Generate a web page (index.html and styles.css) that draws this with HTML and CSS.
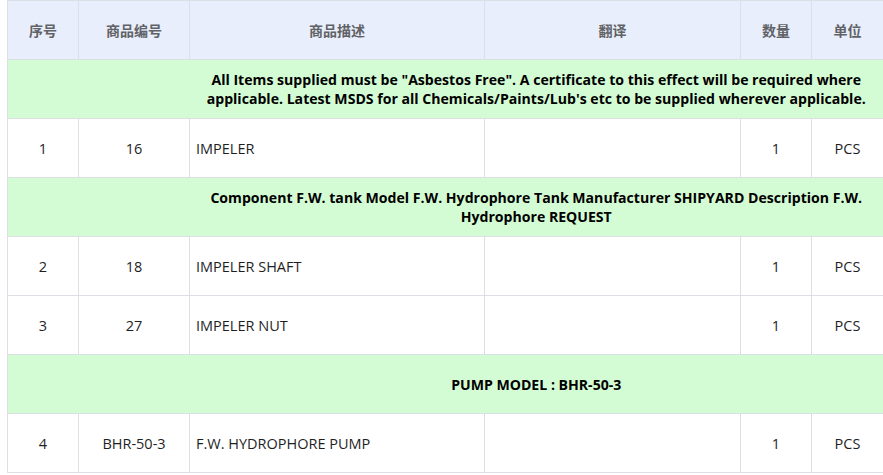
FILE: index.html
```html
<!DOCTYPE html>
<html lang="zh">
<head>
<meta charset="utf-8">
<link rel="stylesheet" href="styles.css">
</head>
<body>
<div class="wrap">
<table class="grid">
  <colgroup>
    <col class="c1"><col class="c2"><col class="c3"><col class="c4"><col class="c5"><col class="c6">
  </colgroup>
  <thead>
    <tr>
      <th>序号</th><th>商品编号</th><th>商品描述</th><th>翻译</th><th>数量</th><th>单位</th>
    </tr>
  </thead>
  <tbody>
    <tr class="note">
      <td class="pad" colspan="2"></td>
      <td class="txt" colspan="4">All Items supplied must be "Asbestos Free". A certificate to this effect will be required where applicable. Latest MSDS for all Chemicals/Paints/Lub's etc to be supplied wherever applicable.</td>
    </tr>
    <tr>
      <td>1</td><td>16</td><td class="left">IMPELER</td><td class="left"></td><td>1</td><td>PCS</td>
    </tr>
    <tr class="note">
      <td class="pad" colspan="2"></td>
      <td class="txt" colspan="4">Component F.W. tank Model F.W. Hydrophore Tank Manufacturer SHIPYARD Description F.W. Hydrophore REQUEST</td>
    </tr>
    <tr>
      <td>2</td><td>18</td><td class="left">IMPELER SHAFT</td><td class="left"></td><td>1</td><td>PCS</td>
    </tr>
    <tr>
      <td>3</td><td>27</td><td class="left">IMPELER NUT</td><td class="left"></td><td>1</td><td>PCS</td>
    </tr>
    <tr class="note">
      <td class="pad" colspan="2"></td>
      <td class="txt" colspan="4">PUMP MODEL : BHR-50-3</td>
    </tr>
    <tr>
      <td>4</td><td>BHR-50-3</td><td class="left">F.W. HYDROPHORE PUMP</td><td class="left"></td><td>1</td><td>PCS</td>
    </tr>
  </tbody>
</table>
</div>
</body>
</html>
```
FILE: styles.css
```css
html, body {
  margin: 0;
  padding: 0;
  background: #ffffff;
}
.wrap {
  padding-left: 7px;
}
.grid {
  border-collapse: collapse;
  table-layout: fixed;
  width: 876px;
  font-family: "Open Sans", "Noto Sans CJK SC", sans-serif;
  font-size: 14.5px;
  color: #1f1f1f;
}
.c1 { width: 71px; }
.c2 { width: 111px; }
.c3 { width: 295px; }
.c4 { width: 256px; }
.c5 { width: 71px; }
.c6 { width: 72px; }
.grid th, .grid td {
  border: 1px solid #dcdfe6;
  height: 59px;
  padding: 0 6px;
  text-align: center;
  vertical-align: middle;
  line-height: 19px;
  box-sizing: border-box;
}
.grid th {
  background: #e9eefc;
  color: #606266;
  font-size: 14px;
  font-weight: bold;
  font-family: "Noto Sans CJK SC", sans-serif;
}
.grid td.left {
  text-align: left;
}
.note td {
  background: #d4fcd4;
  color: #000;
  font-size: 14.1px;
  font-weight: bold;
}
.note td.pad {
  border-right: none;
}
.note td.txt {
  border-left: none;
  padding: 0 10px;
}
```
